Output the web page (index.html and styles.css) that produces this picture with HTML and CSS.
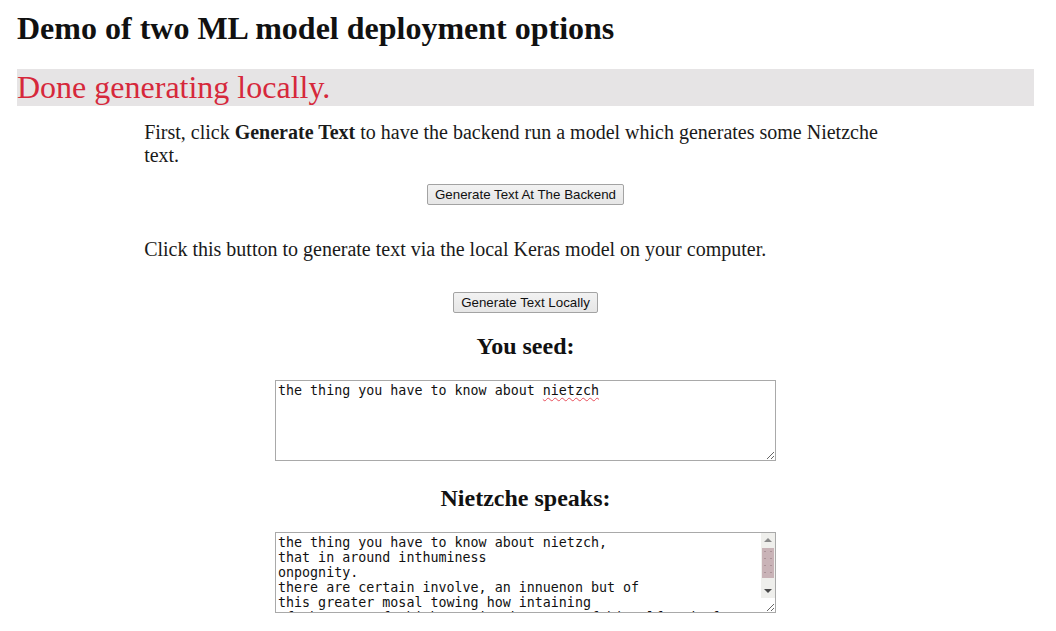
FILE: index.html
```html
<!DOCTYPE html>
<html>
<head>
<meta charset="utf-8">
<title>Demo of two ML model deployment options</title>
<link rel="stylesheet" href="styles.css">
</head>
<body>
<h1 class="title">Demo of two ML model deployment options</h1>
<div class="status">Done generating locally.</div>
<div class="container">
  <p class="text intro">First, click <b>Generate Text</b> to have the backend run a model which generates some Nietzche text.</p>
  <div class="btn-row row-1"><button class="btn">Generate Text At The Backend</button></div>
  <p class="text local">Click this button to generate text via the local Keras model on your computer.</p>
  <div class="btn-row row-2"><button class="btn">Generate Text Locally</button></div>
  <h2 class="sub seed-title">You seed:</h2>
  <div class="area-wrap">
    <textarea class="area seed" spellcheck="false">the thing you have to know about nietzch</textarea>
    <span class="spell"><span class="spell-pad">the thing you have to know about </span><span class="spell-word">nietzch</span></span>
  </div>
  <h2 class="sub speak-title">Nietzche speaks:</h2>
  <div class="area-wrap">
    <textarea class="area speak" spellcheck="false">the thing you have to know about nietzch,
that in around inthuminess
onpognity.
there are certain involve, an innuenon but of
this greater mosal towing how intaining
of the sort of which man is the worst of himself and of</textarea>
    <div class="vscroll">
      <div class="sb-btn"><svg width="14" height="14" viewBox="0 0 14 14"><path d="M3 9 L7 5 L11 9 Z" fill="#8a8a8a"/></svg></div>
      <div class="sb-track"><div class="sb-thumb"></div></div>
      <div class="sb-btn"><svg width="14" height="14" viewBox="0 0 14 14"><path d="M3 5 L11 5 L7 9 Z" fill="#4a4a4a"/></svg></div>
    </div>
  </div>
</div>
</body>
</html>
```
FILE: styles.css
```css
html, body {
  background: #ffffff;
}
body {
  margin: 0;
  padding: 10px 22px 0 17px;
  font-family: "Liberation Serif", "Times New Roman", serif;
  color: #1a1a1a;
}
.title {
  margin: 0 0 22px;
  font-size: 32px;
  line-height: 37px;
  font-weight: bold;
  color: #111111;
}
.status {
  background: #e6e4e5;
  color: #d6283b;
  font-size: 32px;
  line-height: 37px;
}
.container {
  width: 75%;
  margin: 0 auto;
}
.text {
  font-size: 20px;
  line-height: 23px;
  margin: 0;
}
.intro {
  margin-top: 15px;
}
.local {
  margin-top: 33px;
}
.btn-row {
  text-align: center;
  line-height: 0;
}
.row-1 {
  margin-top: 17px;
}
.row-2 {
  margin-top: 31px;
}
.btn {
  font-family: "Liberation Sans", Arial, sans-serif;
  font-size: 13.33px;
  line-height: 15px;
  color: #111111;
  padding: 2px 7px;
  border: 1px solid #a3a3a3;
  border-radius: 2px;
  background: linear-gradient(#f2f2f2, #e6e6e6);
  margin: 0;
}
.sub {
  font-size: 24px;
  line-height: 28px;
  font-weight: bold;
  text-align: center;
  margin: 0;
  color: #111111;
}
.seed-title {
  margin-top: 19px;
}
.speak-title {
  margin-top: 23px;
}
.area-wrap {
  position: relative;
  width: 501px;
  margin: 20px auto 0;
}
.area {
  display: block;
  box-sizing: border-box;
  width: 501px;
  height: 81px;
  margin: 0;
  padding: 2px;
  border: 1px solid #a9a9a9;
  font-family: "DejaVu Sans Mono", monospace;
  font-size: 13.33px;
  line-height: 15px;
  color: #111111;
  background: #ffffff;
  resize: both;
}
.speak {
  overflow: hidden;
  padding-right: 16px;
}
.spell {
  position: absolute;
  left: 3px;
  top: 3px;
  font-family: "DejaVu Sans Mono", monospace;
  font-size: 13.33px;
  line-height: 15px;
  color: transparent;
  white-space: pre;
  pointer-events: none;
}
.spell-word {
  text-decoration-line: underline;
  text-decoration-style: wavy;
  text-decoration-color: #e8505c;
  text-decoration-thickness: 1px;
  text-underline-offset: 2px;
}
.vscroll {
  position: absolute;
  right: 1px;
  top: 1px;
  width: 14px;
  height: 65px;
  display: flex;
  flex-direction: column;
  background: #efefec;
}
.sb-btn {
  height: 14px;
  flex: none;
  display: flex;
}
.sb-track {
  flex: 1;
  padding: 1px 1px 0;
}
.sb-thumb {
  height: 30px;
  background: #c9b3b7;
  background-image: radial-gradient(#ab9398 0.6px, transparent 0.9px);
  background-size: 6px 7px;
}
```
